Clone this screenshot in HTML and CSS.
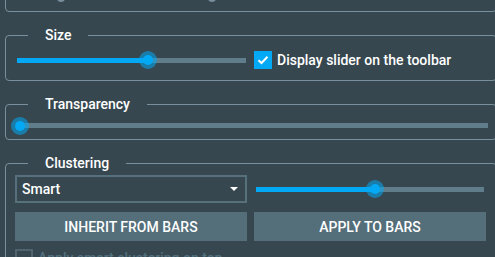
FILE: index.html
```html
<!DOCTYPE html>
<html lang="en">
<head>
    <meta charset="UTF-8">
    <meta name="viewport" content="width=device-width, initial-scale=1.0">
    <title>Bar Settings</title>
    <link rel="stylesheet" href="styles.css">
</head>
<body>
    <div class="panel">
        <!-- previous group, scrolled mostly out of view -->
        <fieldset class="group group-top">
            <div class="peek peek-a"></div>
            <div class="peek peek-b"></div>
        </fieldset>

        <fieldset class="group group-size">
            <legend>Size</legend>
            <div class="row">
                <div class="slider slider-size">
                    <div class="fill" style="width: 57%"></div>
                    <div class="thumb" style="left: 57%"></div>
                </div>
                <label class="check">
                    <span class="box checked">
                        <svg width="12" height="10" viewBox="0 0 12 10"><path d="M1.5 5.2 L4.5 8 L10.5 1.8" fill="none" stroke="#fff" stroke-width="2"/></svg>
                    </span>
                    Display slider on the toolbar
                </label>
            </div>
        </fieldset>

        <fieldset class="group group-transparency">
            <legend>Transparency</legend>
            <div class="slider slider-wide">
                <div class="fill" style="width: 0%"></div>
                <div class="thumb" style="left: 0%"></div>
            </div>
        </fieldset>

        <fieldset class="group group-clustering">
            <legend>Clustering</legend>
            <div class="grid">
                <div class="select">
                    <span>Smart</span>
                    <span class="caret"></span>
                </div>
                <div class="slider slider-cluster">
                    <div class="fill" style="width: 52%"></div>
                    <div class="thumb" style="left: 52%"></div>
                </div>
                <button type="button">Inherit from bars</button>
                <button type="button">Apply to bars</button>
            </div>
            <label class="check disabled">
                <span class="box"></span>
                Apply smart clustering on top
            </label>
        </fieldset>
    </div>
</body>
</html>
```

FILE: styles.css
```css
/* Global styles */
body {
    margin: 0;
    padding: 0;
    background-color: #37474f;
    font-family: Roboto, "Liberation Sans", sans-serif;
    color: #fff;
    overflow: hidden;
    height: 257px;
}

.panel {
    width: 492px;
    margin-left: 5px;
}

.group {
    margin: 0 0 15px 0;
    border: 1px solid #78909c;
    border-radius: 4px;
    padding: 0 8px 0 9px;
    min-width: 0;
}

legend {
    margin-left: 13px;
    padding: 0 17px;
    font-size: 14px;
    font-weight: 500;
    line-height: 16px;
}

.group-top {
    margin-top: -30px;
    margin-bottom: 15px;
    height: 40px;
    position: relative;
}

.peek {
    position: absolute;
    bottom: 9px;
    width: 8px;
    height: 8px;
    border-radius: 50%;
    background-color: #78909c;
}

.peek-a { left: 51px; }
.peek-b { left: 202px; }

/* Size */
.group-size {
    padding-top: 7px;
    padding-bottom: 10px;
}

.row {
    display: flex;
    align-items: center;
    height: 20px;
}

.slider {
    position: relative;
    height: 5px;
    background-color: #607d8b;
}

.fill {
    height: 100%;
    background-color: #03a9f4;
}

.thumb {
    position: absolute;
    top: 50%;
    width: 10px;
    height: 10px;
    margin: -5px 0 0 -5px;
    border-radius: 50%;
    background-color: #03a9f4;
    box-shadow: 0 0 0 4px rgba(3, 169, 244, 0.55);
}

.slider-size {
    width: 229px;
    margin-left: 2px;
}

.check {
    display: flex;
    align-items: center;
    gap: 5px;
    font-size: 14px;
    font-weight: 500;
}

.group-size .check {
    margin-left: 8px;
}

.box {
    width: 18px;
    height: 18px;
    box-sizing: border-box;
    display: flex;
    align-items: center;
    justify-content: center;
    border: 2px solid #4f646e;
}

.box.checked {
    background-color: #03a9f4;
    border-color: #03a9f4;
}

/* Transparency */
.group-transparency {
    padding-top: 11px;
    padding-bottom: 11px;
}

.slider-wide {
    width: 468px;
    margin-left: 5px;
}

/* Clustering */
.group-clustering {
    padding-top: 4px;
    padding-bottom: 10px;
}

.grid {
    display: grid;
    grid-template-columns: 232px 232px;
    column-gap: 7px;
    row-gap: 9px;
}

.select {
    height: 28px;
    box-sizing: border-box;
    border: 2px solid #56707c;
    display: flex;
    align-items: center;
    justify-content: space-between;
    padding: 0 7px 0 5px;
    font-size: 14px;
    font-weight: 500;
}

.caret {
    width: 0;
    height: 0;
    border-left: 4px solid transparent;
    border-right: 4px solid transparent;
    border-top: 4px solid #fff;
}

.slider-cluster {
    align-self: center;
    width: 228px;
    margin-left: 2px;
}

button {
    height: 29px;
    border: none;
    background-color: #546e7a;
    color: #fff;
    font-family: inherit;
    font-size: 14px;
    font-weight: 500;
    text-transform: uppercase;
}

.check.disabled {
    margin-top: 8px;
    color: #52707e;
}
```
